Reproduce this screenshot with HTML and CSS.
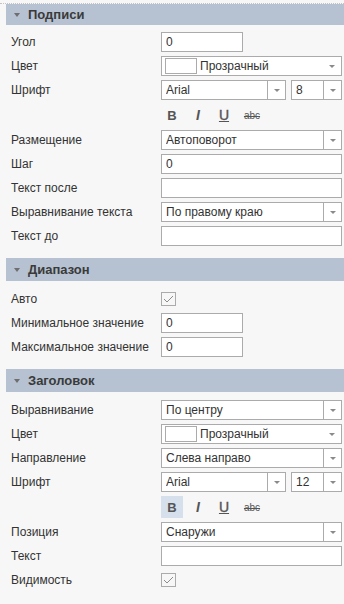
FILE: index.html
```html
<!DOCTYPE html>
<html lang="ru">
<head>
  <meta charset="UTF-8" />
  <title>Свойства оси</title>
  <link rel="stylesheet" href="styles.css">
</head>
<body>
  <div class="topline"></div>

  <div class="group">
    <div class="group-head first"><span class="caret"></span>Подписи</div>
    <div class="group-body first">
      <div class="row"><span class="label">Угол</span><div class="field short">0</div></div>
      <div class="row"><span class="label">Цвет</span>
        <div class="field select color"><span class="swatch"></span><span class="sel-text">Прозрачный</span><span class="arrow plain"></span></div>
      </div>
      <div class="row"><span class="label">Шрифт</span>
        <div class="font-pair">
          <div class="field select font"><span class="sel-text">Arial</span><span class="arrow"></span></div>
          <div class="field select size"><span class="sel-text">8</span><span class="arrow"></span></div>
        </div>
      </div>
      <div class="row tools"><span class="label"></span>
        <div class="styles">
          <span class="sbtn bold">B</span>
          <span class="sbtn italic">I</span>
          <span class="sbtn under">U</span>
          <span class="sbtn strike">abc</span>
        </div>
      </div>
      <div class="row"><span class="label">Размещение</span>
        <div class="field select"><span class="sel-text">Автоповорот</span><span class="arrow"></span></div>
      </div>
      <div class="row"><span class="label">Шаг</span><div class="field">0</div></div>
      <div class="row"><span class="label">Текст после</span><div class="field"></div></div>
      <div class="row"><span class="label">Выравнивание текста</span>
        <div class="field select"><span class="sel-text">По правому краю</span><span class="arrow"></span></div>
      </div>
      <div class="row"><span class="label">Текст до</span><div class="field"></div></div>
    </div>
  </div>

  <div class="group">
    <div class="group-head"><span class="caret"></span>Диапазон</div>
    <div class="group-body">
      <div class="row"><span class="label">Авто</span>
        <span class="check"><svg width="13" height="12" viewBox="0 0 13 12"><path d="M2 6 L5 9 L11 3" fill="none" stroke="#8c8c8c" stroke-width="1"/></svg></span>
      </div>
      <div class="row"><span class="label">Минимальное значение</span><div class="field short">0</div></div>
      <div class="row"><span class="label">Максимальное значение</span><div class="field short">0</div></div>
    </div>
  </div>

  <div class="group">
    <div class="group-head"><span class="caret"></span>Заголовок</div>
    <div class="group-body">
      <div class="row"><span class="label">Выравнивание</span>
        <div class="field select"><span class="sel-text">По центру</span><span class="arrow"></span></div>
      </div>
      <div class="row"><span class="label">Цвет</span>
        <div class="field select color"><span class="swatch"></span><span class="sel-text">Прозрачный</span><span class="arrow plain"></span></div>
      </div>
      <div class="row"><span class="label">Направление</span>
        <div class="field select"><span class="sel-text">Слева направо</span><span class="arrow"></span></div>
      </div>
      <div class="row"><span class="label">Шрифт</span>
        <div class="font-pair">
          <div class="field select font"><span class="sel-text">Arial</span><span class="arrow"></span></div>
          <div class="field select size"><span class="sel-text">12</span><span class="arrow"></span></div>
        </div>
      </div>
      <div class="row tools"><span class="label"></span>
        <div class="styles">
          <span class="sbtn bold active">B</span>
          <span class="sbtn italic">I</span>
          <span class="sbtn under">U</span>
          <span class="sbtn strike">abc</span>
        </div>
      </div>
      <div class="row"><span class="label">Позиция</span>
        <div class="field select"><span class="sel-text">Снаружи</span><span class="arrow"></span></div>
      </div>
      <div class="row"><span class="label">Текст</span><div class="field"></div></div>
      <div class="row"><span class="label">Видимость</span>
        <span class="check"><svg width="13" height="12" viewBox="0 0 13 12"><path d="M2 6 L5 9 L11 3" fill="none" stroke="#8c8c8c" stroke-width="1"/></svg></span>
      </div>
    </div>
  </div>
</body>
</html>
```

FILE: styles.css
```css
body {
  margin: 0;
  background: #f7f7f7;
  font-family: "Liberation Sans", Arial, sans-serif;
  font-size: 12px;
  color: #333;
  width: 344px;
  overflow: hidden;
}
.topline {
  height: 3px;
  border-bottom: 1px dotted #c4c4c4;
}
.group-head {
  margin-left: 6px;
  height: 23px;
  background: #b6c2d2;
  display: flex;
  align-items: center;
  font-size: 13px;
  font-weight: bold;
  color: #3a3a3a;
}
.group-head.first {
  height: 21px;
}
.caret {
  width: 0;
  height: 0;
  border-left: 3px solid transparent;
  border-right: 3px solid transparent;
  border-top: 4px solid #6e6e6e;
  margin: 1px 8px 0 8px;
}
.group-body {
  padding: 8px 2px 8px 11px;
}
.group-body.first {
  padding-top: 7px;
}
.row {
  display: grid;
  grid-template-columns: 150px 1fr;
  align-items: center;
  height: 20px;
  margin-bottom: 4px;
}
.row.tools {
  height: 22px;
}
.label {
  white-space: nowrap;
}
.field {
  box-sizing: border-box;
  height: 20px;
  border: 1px solid #ababab;
  background: #fff;
  padding: 0 4px;
  line-height: 18px;
}
.field.short {
  width: 82px;
}
.select {
  display: flex;
  padding-right: 0;
}
.sel-text {
  flex: 1;
  white-space: nowrap;
  overflow: hidden;
}
.arrow {
  width: 17px;
  align-self: stretch;
  border-left: 1px solid #ababab;
  position: relative;
}
.arrow::after {
  content: "";
  position: absolute;
  left: 6px;
  top: 8px;
  border-left: 3px solid transparent;
  border-right: 3px solid transparent;
  border-top: 3px solid #8a8a8a;
}
.arrow.plain {
  border-left: none;
}
.arrow.plain::after {
  left: 5px;
}
.color {
  padding-left: 3px;
  align-items: center;
}
.swatch {
  box-sizing: border-box;
  width: 32px;
  height: 16px;
  border: 1px solid #ababab;
  margin-right: 3px;
}
.color .sel-text {
  line-height: 18px;
}
.font-pair {
  display: flex;
  gap: 5px;
}
.select.font {
  width: 125px;
}
.select.size {
  flex: 1;
}
.styles {
  display: flex;
  gap: 4px;
  height: 22px;
}
.sbtn {
  width: 22px;
  height: 22px;
  display: flex;
  align-items: center;
  justify-content: center;
  color: #555;
  font-size: 13px;
  font-weight: bold;
}
.sbtn.active {
  background: #d6e0ec;
}
.sbtn.italic {
  font-style: italic;
  font-size: 14px;
}
.sbtn.under {
  text-decoration: underline;
  font-weight: normal;
  font-size: 14px;
  -webkit-text-stroke: 0.4px #555;
}
.sbtn.strike {
  text-decoration: line-through;
  font-size: 10px;
  font-weight: normal;
  width: 26px;
}
.check {
  box-sizing: border-box;
  width: 15px;
  height: 14px;
  border: 1px solid #ababab;
  background: #f7f7f7;
  display: flex;
  align-items: center;
  justify-content: center;
}
.check svg {
  display: block;
}
```
